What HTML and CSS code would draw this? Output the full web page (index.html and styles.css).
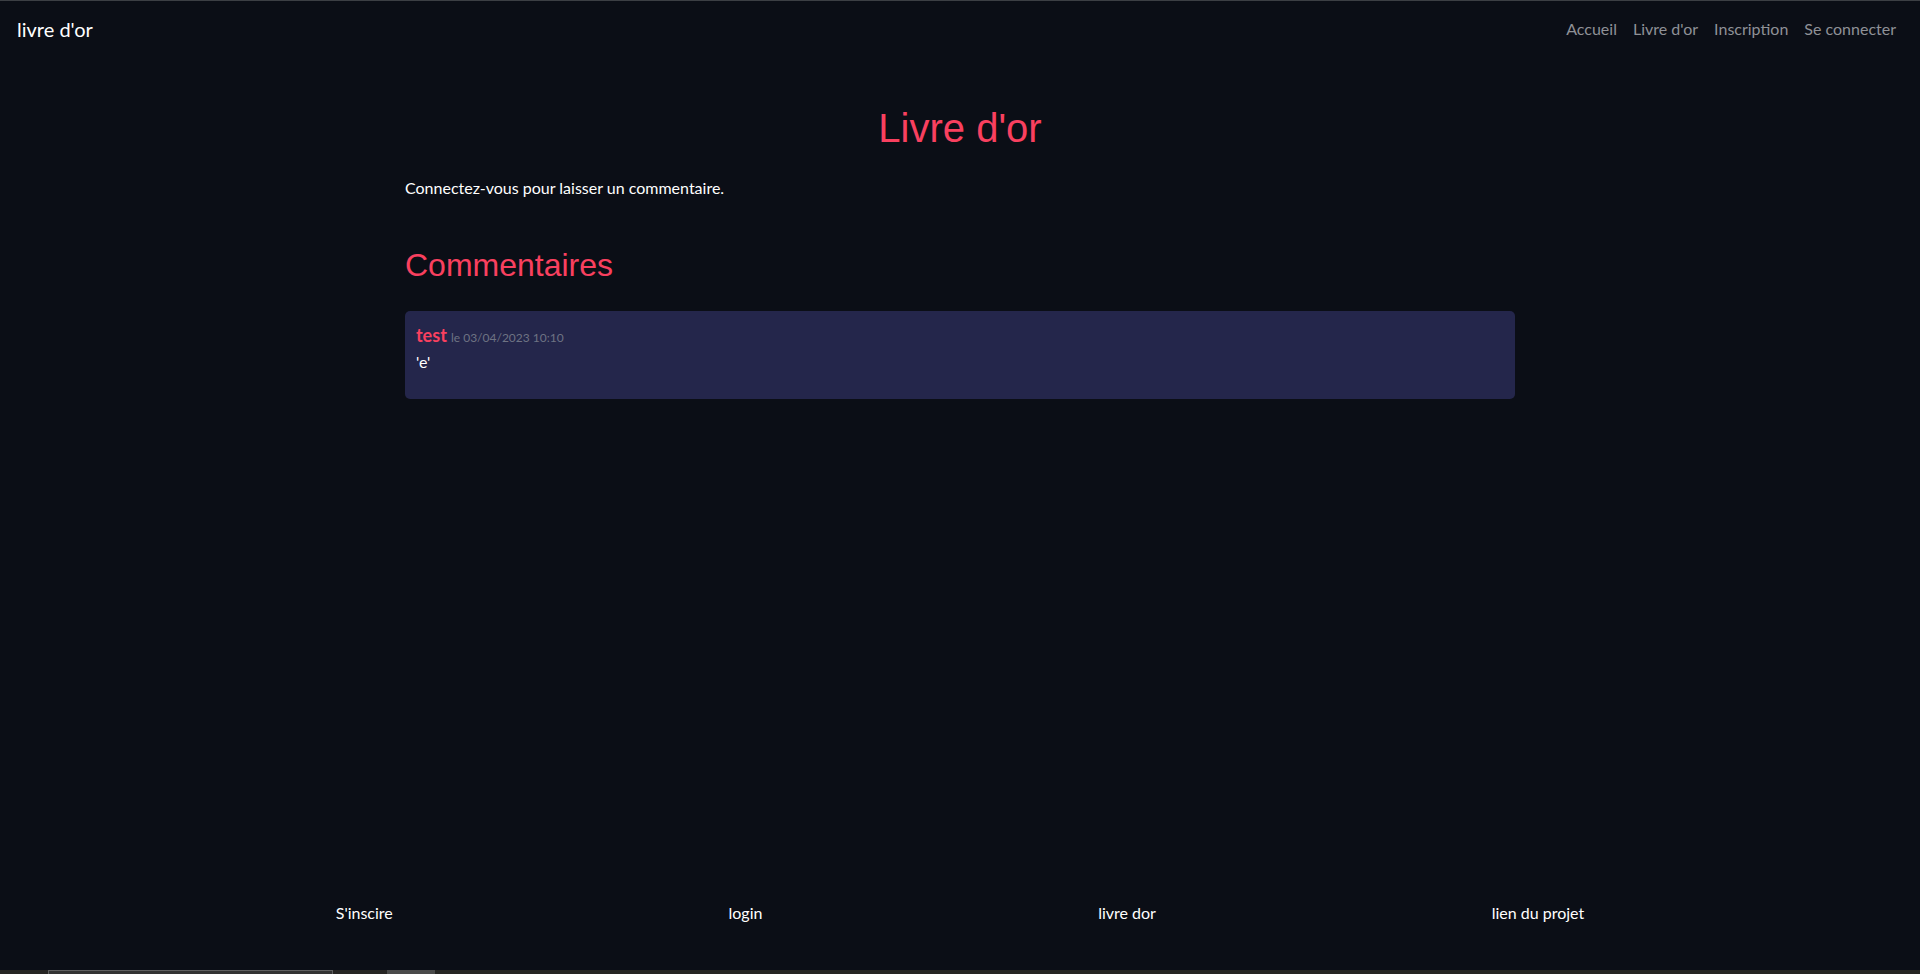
FILE: index.html
```html
<!DOCTYPE html>
<html lang="fr">
<head>
<meta charset="utf-8">
<title>Livre d'or</title>
<link rel="stylesheet" href="styles.css">
</head>
<body>
<nav class="navbar">
  <a class="brand" href="#">livre d'or</a>
  <ul class="nav-links">
    <li><a href="#">Accueil</a></li>
    <li><a href="#">Livre d'or</a></li>
    <li><a href="#">Inscription</a></li>
    <li><a href="#">Se connecter</a></li>
  </ul>
</nav>
<main class="container">
  <h1 class="page-title">Livre d'or</h1>
  <p class="notice">Connectez-vous pour laisser un commentaire.</p>
  <h2 class="section-title">Commentaires</h2>
  <div class="comment">
    <div class="comment-head"><span class="author">test</span> <small class="date">le 03/04/2023 10:10</small></div>
    <p class="comment-body">'e'</p>
  </div>
</main>
<footer class="footer">
  <a href="#">S'inscire</a>
  <a href="#">login</a>
  <a href="#">livre dor</a>
  <a href="#">lien du projet</a>
</footer>
<div class="taskbar"><span class="tb-pad"></span><span class="tb-box"></span><span class="tb-gap"></span><span class="tb-thumb"></span></div>
</body>
</html>
```
FILE: styles.css
```css
html, body {
  margin: 0;
  padding: 0;
}
body {
  background: #0b0e16;
  color: #ffffff;
  font-family: "Lato", "Noto Sans", sans-serif;
  font-size: 16px;
  line-height: 24px;
  min-height: 100vh;
  display: flex;
  flex-direction: column;
}
a {
  text-decoration: none;
  color: inherit;
}
.navbar {
  border-top: 1px solid #3c3f44;
  height: 56px;
  padding: 0 16px;
  display: flex;
  align-items: center;
  justify-content: space-between;
}
.brand {
  font-size: 20px;
  line-height: 30px;
  color: #ffffff;
  padding-left: 1px;
}
.nav-links {
  list-style: none;
  margin: 0;
  padding: 0;
  display: flex;
}
.nav-links a {
  display: block;
  padding: 8px;
  color: #8f9196;
}
.container {
  flex: 1;
  width: 1110px;
  margin: 0 auto;
  padding-top: 47px;
}
.page-title {
  font-family: "Liberation Sans", Arial, sans-serif;
  font-weight: 400;
  font-size: 40px;
  line-height: 48px;
  color: #f9405f;
  text-align: center;
  margin: 0 0 24px;
}
.notice {
  margin: 0;
}
.section-title {
  font-family: "Liberation Sans", Arial, sans-serif;
  font-weight: 400;
  font-size: 32px;
  line-height: 38px;
  color: #f9405f;
  margin: 46px 0 27px;
}
.comment {
  background: #24264b;
  border-radius: 5px;
  padding: 11px 11px 9px;
  height: 68px;
}
.comment-head {
  line-height: 26px;
}
.author {
  color: #f9405f;
  font-weight: 700;
  font-size: 18px;
}
.date {
  color: #6e7383;
  font-size: 12px;
}
.comment-body {
  margin: -1px 0 0;
}
.footer {
  display: flex;
  justify-content: space-evenly;
  padding-bottom: 45px;
}
.taskbar {
  height: 4px;
  background: #262523;
  display: flex;
}
.tb-pad {
  width: 48px;
}
.tb-box {
  width: 285px;
  box-sizing: border-box;
  border: 1px solid #606060;
  border-bottom: 0;
  background: #333333;
}
.tb-gap {
  width: 54px;
}
.tb-thumb {
  width: 48px;
  background: #4a4a4a;
}
```
